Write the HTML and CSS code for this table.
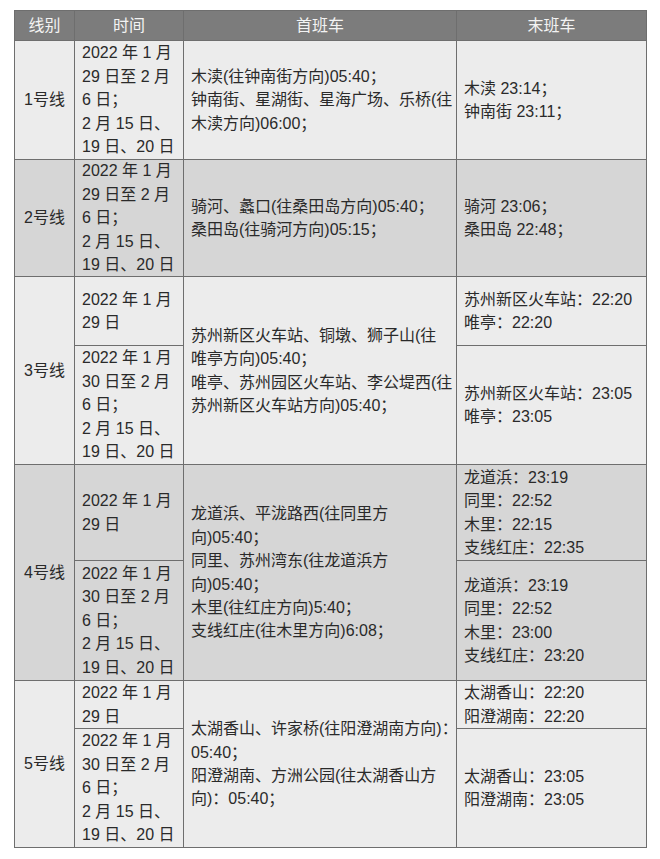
FILE: index.html
```html
<!DOCTYPE html>
<html lang="zh-CN">
<head>
<meta charset="utf-8">
<title>苏州轨道交通春节运营时间</title>
<link rel="stylesheet" href="styles.css">
</head>
<body>
<div class="table">
  <div class="cell head">线别</div>
  <div class="cell head">时间</div>
  <div class="cell head">首班车</div>
  <div class="cell head">末班车</div>

  <div class="cell line light">1号线</div>
  <div class="cell txt light">2022 年 1 月<br>29 日至 2 月<br>6 日；<br>2 月 15 日、<br>19 日、20 日</div>
  <div class="cell txt light">木渎(往钟南街方向)05:40；<br>钟南街、星湖街、星海广场、乐桥(往<br>木渎方向)06:00；</div>
  <div class="cell txt light">木渎 23:14；<br>钟南街 23:11；</div>

  <div class="cell line dark">2号线</div>
  <div class="cell txt dark">2022 年 1 月<br>29 日至 2 月<br>6 日；<br>2 月 15 日、<br>19 日、20 日</div>
  <div class="cell txt dark">骑河、蠡口(往桑田岛方向)05:40；<br>桑田岛(往骑河方向)05:15；</div>
  <div class="cell txt dark">骑河 23:06；<br>桑田岛 22:48；</div>

  <div class="cell line light span2">3号线</div>
  <div class="cell txt light">2022 年 1 月<br>29 日</div>
  <div class="cell txt light span2">苏州新区火车站、铜墩、狮子山(往<br>唯亭方向)05:40；<br>唯亭、苏州园区火车站、李公堤西(往<br>苏州新区火车站方向)05:40；</div>
  <div class="cell txt light">苏州新区火车站：22:20<br>唯亭：22:20</div>
  <div class="cell txt light">2022 年 1 月<br>30 日至 2 月<br>6 日；<br>2 月 15 日、<br>19 日、20 日</div>
  <div class="cell txt light">苏州新区火车站：23:05<br>唯亭：23:05</div>

  <div class="cell line dark span2">4号线</div>
  <div class="cell txt dark">2022 年 1 月<br>29 日</div>
  <div class="cell txt dark span2">龙道浜、平泷路西(往同里方<br>向)05:40；<br>同里、苏州湾东(往龙道浜方<br>向)05:40；<br>木里(往红庄方向)5:40；<br>支线红庄(往木里方向)6:08；</div>
  <div class="cell txt dark">龙道浜：23:19<br>同里：22:52<br>木里：22:15<br>支线红庄：22:35</div>
  <div class="cell txt dark">2022 年 1 月<br>30 日至 2 月<br>6 日；<br>2 月 15 日、<br>19 日、20 日</div>
  <div class="cell txt dark">龙道浜：23:19<br>同里：22:52<br>木里：23:00<br>支线红庄：23:20</div>

  <div class="cell line light span2">5号线</div>
  <div class="cell txt light">2022 年 1 月<br>29 日</div>
  <div class="cell txt light span2">太湖香山、许家桥(往阳澄湖南方向)：<br>05:40；<br>阳澄湖南、方洲公园(往太湖香山方<br>向)：05:40；</div>
  <div class="cell txt light">太湖香山：22:20<br>阳澄湖南：22:20</div>
  <div class="cell txt light">2022 年 1 月<br>30 日至 2 月<br>6 日；<br>2 月 15 日、<br>19 日、20 日</div>
  <div class="cell txt light">太湖香山：23:05<br>阳澄湖南：23:05</div>
</div>
</body>
</html>
```
FILE: styles.css
```css
html, body {
  margin: 0;
  padding: 0;
  background: #ffffff;
}

body {
  padding: 10px 0 0 14px;
  font-family: "Liberation Sans", "Noto Sans CJK SC", sans-serif;
  font-size: 16px;
  color: #2a2a2a;
}

.table {
  display: grid;
  width: 633px;
  box-sizing: border-box;
  padding: 1px;
  gap: 1px;
  background: #6e6e6e;
  grid-template-columns: 59px 108px 272px 189px;
  grid-template-rows: 29px 118px 116px 68px 118px 95px 119px 47px 118px;
}

.cell {
  display: flex;
  align-items: center;
  line-height: 23.4px;
  white-space: nowrap;
  overflow: visible;
}

.head {
  justify-content: center;
  background: #7c7c7c;
  color: #f3f3f3;
}

.line {
  justify-content: center;
}

.txt {
  padding: 0 7px;
}

.light {
  background: #ececec;
}

.dark {
  background: #d6d6d6;
}

.span2 {
  grid-row: span 2;
}
```
